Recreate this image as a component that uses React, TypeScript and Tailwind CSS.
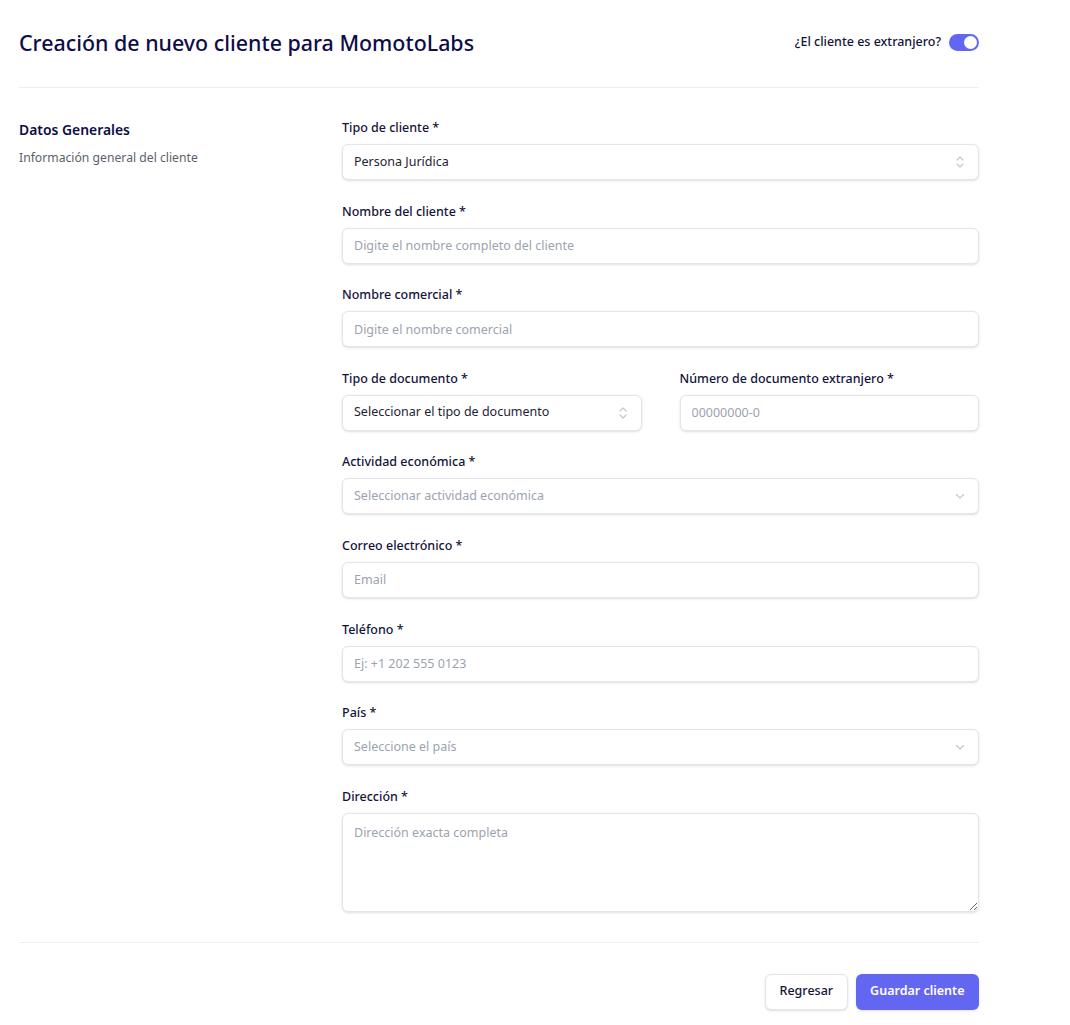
import React from "react";

const font = { fontFamily: '"Noto Sans", "Open Sans", sans-serif' };

function Label({ children }: { children: React.ReactNode }) {
  return (
    <label className="block text-[12.5px] leading-5 font-medium text-[#14143a]">
      {children}
    </label>
  );
}

function UpDown() {
  return (
    <svg width="12" height="16" viewBox="0 0 12 16" fill="none" stroke="#c4c7cf" strokeWidth="1.2" strokeLinecap="round" strokeLinejoin="round">
      <path d="M3 6l3-3 3 3" />
      <path d="M3 10l3 3 3-3" />
    </svg>
  );
}

function Down() {
  return (
    <svg width="12" height="12" viewBox="0 0 12 12" fill="none" stroke="#c4c7cf" strokeWidth="1.2" strokeLinecap="round" strokeLinejoin="round">
      <path d="M2.5 4.5l3.5 3.5 3.5-3.5" />
    </svg>
  );
}

function SelectBox({ value, placeholder, icon }: { value?: string; placeholder?: string; icon: "updown" | "down" }) {
  return (
    <div className="mt-[6px] h-[36px] w-full rounded-md border border-[#e3e5ea] bg-white shadow-sm flex items-center justify-between pl-[11px] pr-[12px]">
      <span className={value ? "text-[12.5px] text-[#1f2333]" : "text-[12.5px] text-[#9ca3af]"}>{value ?? placeholder}</span>
      {icon === "updown" ? <UpDown /> : <Down />}
    </div>
  );
}

function TextInput({ placeholder }: { placeholder: string }) {
  return (
    <input
      placeholder={placeholder}
      className="mt-[6px] block h-[36px] w-full rounded-md border border-[#e3e5ea] bg-white shadow-sm px-[11px] text-[12.5px] text-[#1f2333] placeholder:text-[#9ca3af] outline-none"
      style={font}
    />
  );
}

export default function App() {
  return (
    <div className="min-h-[1025px] bg-white" style={font}>
      <div className="w-[960px] ml-[19px]">
        <div className="flex items-center justify-between pt-[28px] pb-[29px] border-b border-[#eceef1]">
          <h1 className="text-[21.4px] leading-[30px] font-medium text-[#0d0d47]">
            Creación de nuevo cliente para MomotoLabs
          </h1>
          <div className="flex items-center gap-[8px] -mt-[2px]">
            <span className="text-[12.5px] font-medium text-[#14143a]">¿El cliente es extranjero?</span>
            <div className="w-[30px] h-[17px] rounded-full bg-[#6366f1] flex items-center justify-end pr-[2px]">
              <div className="w-[13px] h-[13px] rounded-full bg-white" />
            </div>
          </div>
        </div>

        <div className="flex pt-[30px] pb-[30px] border-b border-[#eceef1]">
          <div className="w-[323px] shrink-0">
            <h2 className="text-[13.9px] leading-5 font-semibold text-[#0d0d47] mt-[2px]">Datos Generales</h2>
            <p className="mt-[8px] text-[12.2px] leading-5 text-[#5b5f6b]">Información general del cliente</p>
          </div>

          <div className="flex-1 flex flex-col gap-[21.6px]">
            <div>
              <Label>Tipo de cliente *</Label>
              <SelectBox value="Persona Jurídica" icon="updown" />
            </div>
            <div>
              <Label>Nombre del cliente *</Label>
              <TextInput placeholder="Digite el nombre completo del cliente" />
            </div>
            <div>
              <Label>Nombre comercial *</Label>
              <TextInput placeholder="Digite el nombre comercial" />
            </div>
            <div className="grid grid-cols-2 gap-x-[38px]">
              <div>
                <Label>Tipo de documento *</Label>
                <SelectBox value="Seleccionar el tipo de documento" icon="updown" />
              </div>
              <div>
                <Label>Número de documento extranjero *</Label>
                <TextInput placeholder="00000000-0" />
              </div>
            </div>
            <div>
              <Label>Actividad económica *</Label>
              <SelectBox placeholder="Seleccionar actividad económica" icon="down" />
            </div>
            <div>
              <Label>Correo electrónico *</Label>
              <TextInput placeholder="Email" />
            </div>
            <div>
              <Label>Teléfono *</Label>
              <TextInput placeholder="Ej: +1 202 555 0123" />
            </div>
            <div>
              <Label>País *</Label>
              <SelectBox placeholder="Seleccione el país" icon="down" />
            </div>
            <div>
              <Label>Dirección *</Label>
              <textarea
                placeholder="Dirección exacta completa"
                className="mt-[6px] block h-[99px] w-full rounded-md border border-[#e3e5ea] bg-white shadow-sm px-[11px] py-[10px] text-[12.5px] text-[#1f2333] placeholder:text-[#9ca3af] outline-none"
                style={font}
              />
            </div>
          </div>
        </div>

        <div className="flex justify-end gap-[8px] pt-[31px] pb-[15px]">
          <button className="h-[36px] px-[13.5px] rounded-md border border-[#e3e5ea] bg-white shadow-sm text-[12.5px] font-medium text-[#14143a]">
            Regresar
          </button>
          <button className="h-[36px] px-[14.5px] rounded-md bg-[#6366f1] shadow-sm text-[12.5px] font-semibold text-white">
            Guardar cliente
          </button>
        </div>
      </div>
    </div>
  );
}
